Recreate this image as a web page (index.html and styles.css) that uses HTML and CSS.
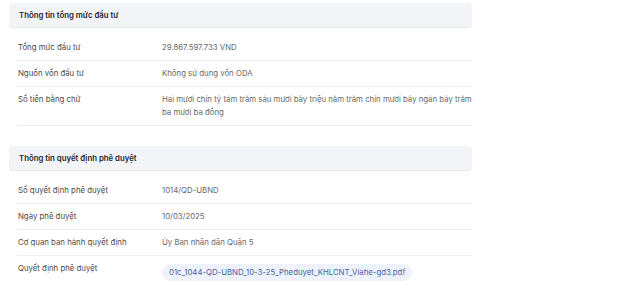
FILE: index.html
```html
<!DOCTYPE html>
<html lang="vi">
<head>
<meta charset="utf-8">
<link rel="stylesheet" href="styles.css">
</head>
<body>
<div class="page">
  <section class="section">
    <div class="section-head">Thông tin tổng mức đầu tư</div>
    <div class="rows">
      <div class="row"><div class="label">Tổng mức đầu tư</div><div class="value">29.867.597.733 VND</div></div>
      <div class="row"><div class="label">Nguồn vốn đầu tư</div><div class="value">Không sử dụng vốn ODA</div></div>
      <div class="row"><div class="label">Số tiền bằng chữ</div><div class="value">Hai mươi chín tỷ tám trăm sáu mươi bảy triệu năm trăm chín mươi bảy ngàn bảy trăm ba mươi ba đồng</div></div>
    </div>
  </section>
  <section class="section section-second">
    <div class="section-head">Thông tin quyết định phê duyệt</div>
    <div class="rows">
      <div class="row"><div class="label">Số quyết định phê duyệt</div><div class="value">1014/QD-UBND</div></div>
      <div class="row"><div class="label">Ngày phê duyệt</div><div class="value">10/03/2025</div></div>
      <div class="row"><div class="label">Cơ quan ban hành quyết định</div><div class="value">Ủy Ban nhân dân Quận 5</div></div>
      <div class="row row-last"><div class="label">Quyết định phê duyệt</div><div class="value"><span class="file-pill">01c_1044-QD-UBND_10-3-25_Pheduyet_KHLCNT_Viahe-gd3.pdf</span></div></div>
    </div>
  </section>
</div>
</body>
</html>
```
FILE: styles.css
```css
* { box-sizing: border-box; }
html, body { margin: 0; padding: 0; background: #ffffff; }
body {
  font-family: Inter, "Noto Sans", "DejaVu Sans", sans-serif;
  font-size: 7.8px;
  color: #4b4b4b;
}
.page {
  padding: 3px 0 0 9px;
  width: 472px;
}
.section-second { margin-top: 20px; }
.section-head {
  height: 24px;
  line-height: 24px;
  padding: 0 10px;
  background: #f2f4f8;
  border-radius: 4px;
  box-shadow: 0 1px 0 #e6e8ec;
  font-weight: 600;
  color: #222426;
}
.rows {
  margin-top: 8px;
  margin-left: 8px;
}
.row {
  display: flex;
  padding: 6px 0 6px 1px;
  line-height: 13px;
  border-bottom: 1px solid #efefef;
}
.row-last { border-bottom: none; }
.label {
  width: 144px;
  flex: none;
  color: #4a4a4a;
}
.value {
  flex: 1;
  color: #6a6a6a;
}
.file-pill {
  display: inline-block;
  margin-top: 2px;
  height: 17px;
  line-height: 17px;
  padding: 0 7px;
  border-radius: 9px;
  background: #eef2fb;
  color: #4a62a6;
}
```
